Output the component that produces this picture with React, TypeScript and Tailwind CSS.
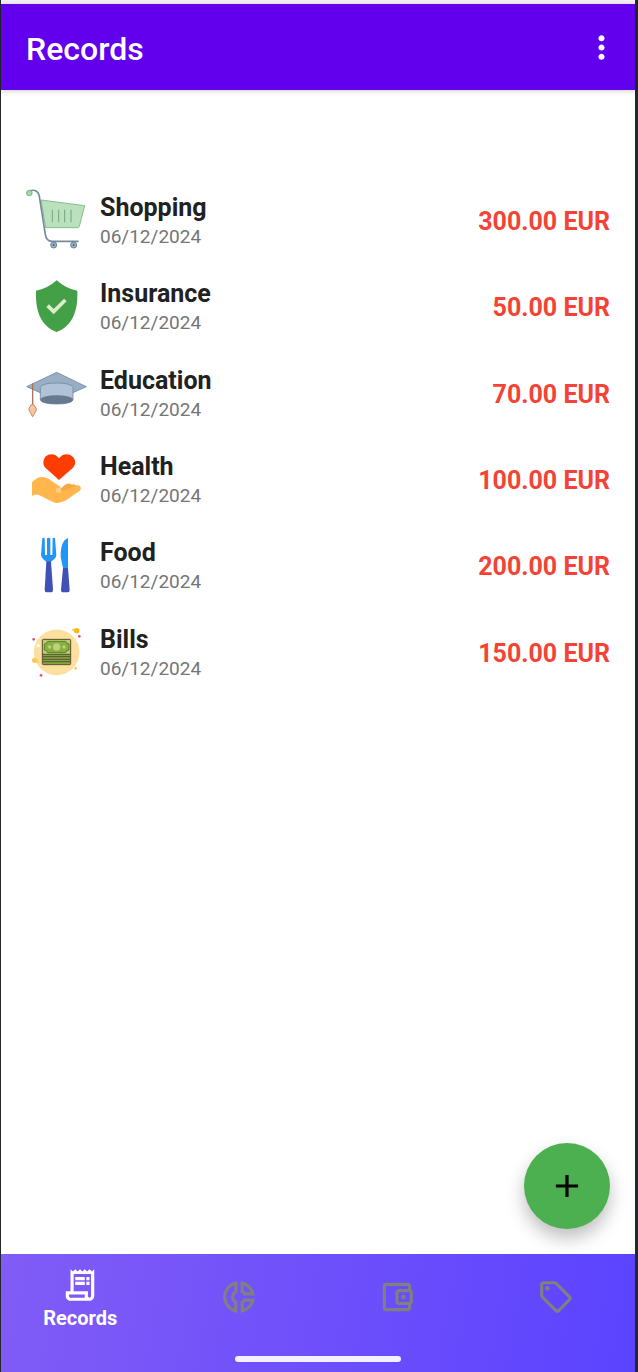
import type { ReactNode } from "react";
import {
  MdAdd,
  MdMoreVert,
  MdOutlineAccountBalanceWallet,
  MdOutlineDonutSmall,
  MdOutlineReceiptLong,
  MdOutlineSell,
} from "react-icons/md";

function CartIcon() {
  return (
    <svg viewBox="33 27 186 186" className="size-[62px]" fill="none" aria-hidden="true">
      <path d="M78 60 L209 77 L193 139 Q191 143 187 143 H92 Z" fill="#bae0bd" stroke="#84bd8c" strokeWidth="3" />
      <path d="M112 89V127M131 89V127M149 89V127M168 89V127" stroke="#6fa878" strokeWidth="3" />
      <path d="M43 33 C60 27 70 33 73 49 L91 164 Q94 184 111 184 H191" stroke="#788b9c" strokeWidth="5" />
      <circle cx="43" cy="39" r="8.5" fill="#a0d8ab" stroke="#6fb17b" strokeWidth="2.5" />
      <circle cx="116" cy="195" r="9" fill="#98b0cb" stroke="#6d829b" strokeWidth="3" />
      <circle cx="176" cy="195" r="9" fill="#98b0cb" stroke="#6d829b" strokeWidth="3" />
      <circle cx="116" cy="195" r="3" fill="#4f6279" />
      <circle cx="176" cy="195" r="3" fill="#4f6279" />
    </svg>
  );
}

function ShieldIcon() {
  return (
    <svg viewBox="33 30 186 186" className="size-[62px]" fill="none" aria-hidden="true">
      <path d="M125 46 Q96 72 63 77 C61 135 75 181 125 201 C175 181 189 135 187 77 Q154 72 125 46Z" fill="#43a047" />
      <path d="M98 122 L116 140 L151 105" stroke="#dcedc8" strokeWidth="11" />
    </svg>
  );
}

function GraduationIcon() {
  return (
    <svg viewBox="33 20 186 186" className="size-[62px]" aria-hidden="true">
      <path d="M125 51 L214 94 L125 134 L35 94Z" fill="#98aec5" stroke="#74899f" strokeWidth="2.5" />
      <path d="M76 96 Q82 83 125 83 Q168 83 174 96 V134 Q168 146 125 146 Q82 146 76 134Z" fill="#b0c2d6" stroke="#74899f" strokeWidth="2.5" />
      <ellipse cx="125" cy="133" rx="49" ry="13" fill="#66798f" />
      <path d="M53 84 V150" stroke="#a9755c" strokeWidth="4" />
      <path d="M48 149 Q52 145 57 149 Q66 160 64 165 L53 184 L42 165 Q40 160 48 149Z" fill="#ffc49c" stroke="#b37c5e" strokeWidth="2.5" />
    </svg>
  );
}

function HealthIcon() {
  return (
    <svg viewBox="33 24 186 186" className="size-[62px]" aria-hidden="true">
      <path d="M132 120 L92 84 C82 73 84 59 91 50 C103 38 123 41 132 55 C141 41 161 38 173 50 C183 60 183 73 173 84Z" fill="#ff3d00" />
      <path d="M139 144 C149 134 157 130 164 131 Q169 131 170 134 Q178 131 181 136 Q193 134 196 140 L160 174 L124 169Z" fill="#f6a942" />
      <path d="M51 127 Q68 109 84 111 Q96 112 111 124 L134 139 Q140 144 138 153 Q153 154 165 145 L183 137 Q193 136 198 143 Q198 150 192 154 L153 181 Q131 193 115 187 L72 165 Q64 161 51 168Z" fill="#ffb74d" />
      <circle cx="131" cy="151" r="8" fill="#ffcd85" />
    </svg>
  );
}

function CutleryIcon() {
  return (
    <svg viewBox="33 27 186 186" className="size-[62px]" aria-hidden="true">
      <path d="M82 40 Q86 37 89 40 L90 90 H96 V40 Q101 37 106 40 V90 H112 L113 40 Q117 37 120 40 L124 91 Q123 101 108 110 H94 Q80 101 78 91Z" fill="#2196f3" />
      <path d="M94 109 H108 L114 194 Q114 202 108 202 H95 Q89 202 89 194Z" fill="#3f51b5" />
      <path d="M159 39 V129 H144 L137 96 Q136 48 159 39Z" fill="#2196f3" />
      <path d="M144 129 H159 L164 194 Q164 202 158 202 H145 Q138 202 138 194Z" fill="#3f51b5" />
    </svg>
  );
}

function BillsIcon() {
  return (
    <svg viewBox="33 18 186 186" className="size-[62px]" aria-hidden="true">
      <circle cx="125" cy="112" r="68.5" fill="#fddf9f" />
      <rect x="82" y="73" width="85" height="76" rx="3" fill="#7fa63b" stroke="#5e4f34" strokeWidth="3" />
      <rect x="84" y="75" width="81" height="42" fill="#b7cd75" />
      <path d="M98 79 H152 Q153 86 162 87 V105 Q153 106 152 113 H98 Q97 106 88 105 V87 Q97 86 98 79Z" fill="#87b13e" stroke="#57702a" strokeWidth="2.5" />
      <circle cx="125" cy="96" r="11" fill="#bdd17c" />
      <circle cx="104" cy="96" r="5" fill="#bdd17c" />
      <circle cx="147" cy="96" r="5" fill="#bdd17c" />
      <path d="M82 118H167M82 125H167M82 133H167M82 140H167" stroke="#5e4f34" strokeWidth="3" />
      <circle cx="185" cy="47" r="8" fill="#fbb910" />
      <circle cx="175" cy="44" r="3" fill="#fbb910" />
      <circle cx="59" cy="136" r="8" fill="#fdc751" />
      <circle cx="70" cy="142" r="2.5" fill="#fdc751" />
      <circle cx="182" cy="160" r="4" fill="#fdc751" />
      <circle cx="70" cy="92" r="5" fill="#fff" />
      <circle cx="179" cy="80" r="2.5" fill="#fff3cf" />
      <circle cx="193" cy="64" r="4" fill="#f1476b" />
      <circle cx="56" cy="73" r="4" fill="#f1476b" />
      <circle cx="78" cy="181" r="4" fill="#f1476b" />
    </svg>
  );
}

type Item = { name: string; date: string; amount: string; icon: ReactNode };

const records: Item[] = [
  { name: "Shopping", date: "06/12/2024", amount: "300.00 EUR", icon: <CartIcon /> },
  { name: "Insurance", date: "06/12/2024", amount: "50.00 EUR", icon: <ShieldIcon /> },
  { name: "Education", date: "06/12/2024", amount: "70.00 EUR", icon: <GraduationIcon /> },
  { name: "Health", date: "06/12/2024", amount: "100.00 EUR", icon: <HealthIcon /> },
  { name: "Food", date: "06/12/2024", amount: "200.00 EUR", icon: <CutleryIcon /> },
  { name: "Bills", date: "06/12/2024", amount: "150.00 EUR", icon: <BillsIcon /> },
];

const tabClass = "flex h-[86px] flex-1 items-center justify-center text-[#808080]";

export default function App() {
  return (
    <div className="flex min-h-screen flex-col bg-[#26272e] pr-[3px] pl-px font-[Roboto,sans-serif]">
      <div className="h-1 bg-[#f3f1f5]" />
      <header className="z-10 flex h-[86px] items-center justify-between bg-[#6200ee] pr-[15px] pl-[25px] text-white shadow-[0_1px_5px_rgba(0,0,0,0.2)]">
        <h1 className="pt-1 text-[32px] leading-9 font-medium">Records</h1>
        <button type="button" aria-label="More options">
          <MdMoreVert className="size-[37px]" />
        </button>
      </header>

      <main className="relative flex-1 bg-white pt-[87px]">
        <ul className="grid h-[518px] grid-rows-6 px-[25px]">
          {records.map((r) => (
            <li key={r.name} className="flex items-center">
              {r.icon}
              <div className="ml-3 flex-1 pt-[2px]">
                <p className="text-[25px] leading-8 font-bold text-[#212121]">{r.name}</p>
                <p className="text-[19px] leading-[26px] text-[#757575]">{r.date}</p>
              </div>
              <p className="pt-1 text-[25px] leading-8 font-bold text-[#f44336]">{r.amount}</p>
            </li>
          ))}
        </ul>
        <button
          type="button"
          aria-label="Add record"
          className="absolute right-[25px] bottom-[25px] flex size-[86px] items-center justify-center rounded-full bg-[#4caf50] text-black shadow-[0_9px_18px_rgba(0,0,0,0.26)]"
        >
          <MdAdd className="size-[38px]" />
        </button>
      </main>

      <nav className="flex h-[118px] flex-col justify-between bg-[linear-gradient(100deg,#815cf6,#5b43ff)]">
        <div className="flex">
          <a href="#records" aria-current="page" className="flex h-[86px] flex-1 flex-col items-center pt-3 text-white">
            <MdOutlineReceiptLong className="size-[38px]" />
            <span className="pt-[2px] text-[20px] leading-6 font-bold">Records</span>
          </a>
          <a href="#stats" aria-label="Statistics" className={tabClass}>
            <MdOutlineDonutSmall className="size-[38px]" />
          </a>
          <a href="#accounts" aria-label="Accounts" className={tabClass}>
            <MdOutlineAccountBalanceWallet className="size-[38px]" />
          </a>
          <a href="#categories" aria-label="Categories" className={tabClass}>
            <MdOutlineSell className="size-[38px]" />
          </a>
        </div>
        <div className="mb-[10px] h-[6px] w-[166px] self-center rounded-full bg-[#f3f0ff]" />
      </nav>
    </div>
  );
}
